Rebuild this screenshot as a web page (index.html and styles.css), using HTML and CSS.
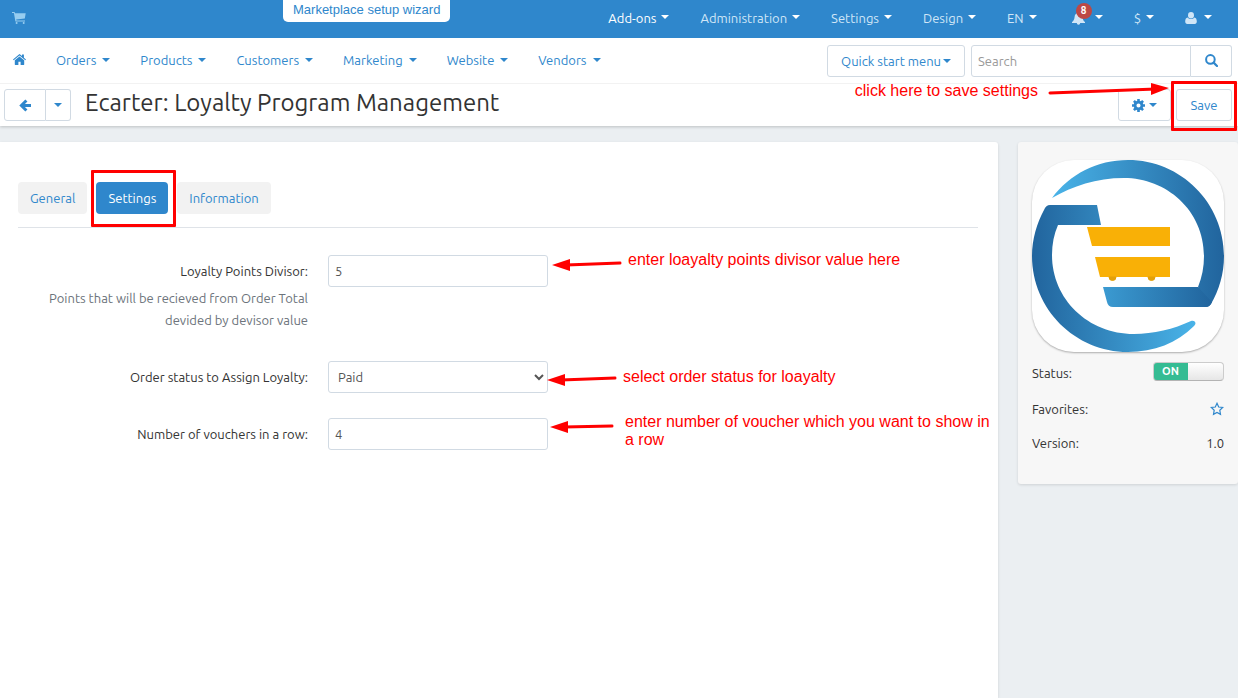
FILE: index.html
```html
<!DOCTYPE html>
<html lang="en">
<head>
    <meta charset="UTF-8">
    <meta name="viewport" content="width=device-width, initial-scale=1.0">
    <title>Ecarter: Loyalty Program Management</title>
    <link rel="stylesheet" href="styles.css">
</head>
<body>
    <header>
      <div class="topbar">
        <a href="#" class="cart" aria-label="Storefront">
          <svg width="14" height="12" viewBox="0 0 14 12"><path d="M0 0h2.6l.4 1.300h10.700l-.9 5.200-8.600 1 .2 1H13v1H3.400L1.900 1H0z" fill="currentColor"/><circle cx="4.600" cy="11" r="1" fill="currentColor"/><circle cx="11.700" cy="11" r="1" fill="currentColor"/></svg>
        </a>
        <a href="#" class="wizard">Marketplace setup wizard</a>
        <nav class="top-nav">
          <a href="#" class="active">Add-ons <i class="caret"></i></a>
          <a href="#">Administration <i class="caret"></i></a>
          <a href="#">Settings <i class="caret"></i></a>
          <a href="#">Design <i class="caret"></i></a>
          <a href="#" class="lang">EN <i class="caret"></i></a>
          <a href="#" class="bell" aria-label="Notifications">
            <svg width="13" height="13" viewBox="0 0 13 13"><path d="M6.500 0c.6 0 .9.400.9.900 2 .4 2.800 2 3 4 .3 2.600 1.100 4 2.600 5.100v1H8.200a1.700 1.700 0 0 1-3.400 0H0v-1c1.500-1.100 2.300-2.500 2.600-5.100.2-2 1-3.600 3-4 0-.5.3-.9.900-.9z" fill="currentColor"/></svg>
            <span class="badge">8</span>
            <i class="caret"></i>
          </a>
          <a href="#">$ <i class="caret"></i></a>
          <a href="#" class="account" aria-label="Account">
            <svg width="12" height="12" viewBox="0 0 12 12"><ellipse cx="6" cy="3.200" rx="3" ry="3.200" fill="currentColor"/><path d="M2.700 5.400C.8 5.600.2 7.400.2 9.600.2 11 1 12 2.300 12h7.400c1.300 0 2.100-1 2.100-2.400 0-2.200-.6-4-2.500-4.200-.8 1-2 1.700-3.300 1.700S3.500 6.400 2.700 5.400z" fill="currentColor"/></svg>
            <i class="caret"></i>
          </a>
        </nav>
      </div>

      <div class="subnav">
        <nav class="main-nav">
          <a href="#" class="home" aria-label="Home">
            <svg width="13" height="11" viewBox="0 0 13 11"><path d="M6.500 0 9 2.100V.6h1.900v3.100L13 5.500l-.7.8-5.800-4.900L.7 6.300 0 5.500z" fill="currentColor"/><path d="M6.500 2.400 11.200 6.300v4.200c0 .3-.2.5-.5.500H7.600V7.700H5.400V11H2.300c-.3 0-.5-.2-.5-.5V6.300z" fill="currentColor"/></svg>
          </a>
          <a href="#">Orders <i class="caret"></i></a>
          <a href="#">Products <i class="caret"></i></a>
          <a href="#">Customers <i class="caret"></i></a>
          <a href="#">Marketing <i class="caret"></i></a>
          <a href="#">Website <i class="caret"></i></a>
          <a href="#">Vendors <i class="caret"></i></a>
        </nav>
        <button type="button" class="btn quick">Quick start menu<i class="caret"></i></button>
        <form class="search">
          <input type="text" placeholder="Search" aria-label="Search">
          <button type="button" aria-label="Find">
            <svg width="13" height="13" viewBox="0 0 13 13"><circle cx="5.400" cy="5.400" r="4.300" fill="none" stroke="currentColor" stroke-width="2"/><path d="M8.600 8.600l3.400 3.400" stroke="currentColor" stroke-width="2.200" stroke-linecap="round"/></svg>
          </button>
        </form>
      </div>

      <div class="actions">
        <div class="btn-group">
          <button type="button" class="btn back" aria-label="Back">
            <svg width="13" height="13" viewBox="0 0 13 13"><path d="M7.400 1.500 2.400 6.500l5 5M3 6.500h9" fill="none" stroke="currentColor" stroke-width="3"/></svg>
          </button>
          <button type="button" class="btn more" aria-label="History"><i class="caret"></i></button>
        </div>
        <h1>Ecarter: Loyalty Program Management</h1>
        <div class="note note-save">
          click here to save settings
          <svg width="122" height="14" viewBox="0 0 122 14"><path d="M2 11 108 7" stroke="#f00" stroke-width="3" stroke-linecap="round"/><path d="M121 6 103 1v12z" fill="#f00"/></svg>
        </div>
        <button type="button" class="btn gear" aria-label="Tools">
          <svg width="13" height="13" viewBox="0 0 12 12"><circle cx="6" cy="6" r="3.200" fill="none" stroke="currentColor" stroke-width="2.600"/><path d="M6 0v2M6 10v2M0 6h2M10 6h2M1.800 1.800l1.400 1.400M8.800 8.800l1.400 1.400M1.800 10.200l1.400-1.400M8.800 3.200l1.400-1.400" stroke="currentColor" stroke-width="2.400"/></svg>
          <i class="caret"></i>
        </button>
        <div class="marked mark-save">
          <button type="button" class="btn save">Save</button>
        </div>
      </div>
    </header>

    <main>
      <section class="panel">
        <div class="tabs">
          <button type="button">General</button>
          <div class="marked mark-tab"><button type="button" class="active">Settings</button></div>
          <button type="button">Information</button>
        </div>

        <form class="settings">
          <div class="row">
            <div class="label">
              <label for="divisor">Loyalty Points Divisor:</label>
              <p>Points that will be recieved from Order Total devided by devisor value</p>
            </div>
            <div class="control">
              <input type="text" id="divisor" value="5">
              <div class="note note-divisor">
                <svg width="70" height="14" viewBox="0 0 70 14"><path d="M68 6 14 8" stroke="#f00" stroke-width="3" stroke-linecap="round"/><path d="M0 8 18 2v12z" fill="#f00"/></svg>
                <span>enter loayalty points divisor value here</span>
              </div>
            </div>
          </div>
          <div class="row">
            <div class="label"><label for="status">Order status to Assign Loyalty:</label></div>
            <div class="control">
              <select id="status"><option>Paid</option></select>
              <div class="note note-status">
                <svg width="70" height="14" viewBox="0 0 70 14"><path d="M68 6 14 8" stroke="#f00" stroke-width="3" stroke-linecap="round"/><path d="M0 8 18 2v12z" fill="#f00"/></svg>
                <span>select order status for loayalty</span>
              </div>
            </div>
          </div>
          <div class="row">
            <div class="label"><label for="vouchers">Number of vouchers in a row:</label></div>
            <div class="control">
              <input type="text" id="vouchers" value="4">
              <div class="note note-vouchers">
                <svg width="64" height="14" viewBox="0 0 64 14"><path d="M62 7 14 8" stroke="#f00" stroke-width="3" stroke-linecap="round"/><path d="M0 8 18 2v12z" fill="#f00"/></svg>
                <span>enter number of voucher which you want to show in a row</span>
              </div>
            </div>
          </div>
        </form>
      </section>

      <aside>
        <div class="logo">
          <svg viewBox="0 0 192 192">
            <defs>
              <linearGradient id="top" x1="20" y1="0" x2="192" y2="0" gradientUnits="userSpaceOnUse"><stop offset="0" stop-color="#49b3e8"/><stop offset="1" stop-color="#21649d"/></linearGradient>
              <linearGradient id="bottom" x1="0" y1="0" x2="163" y2="0" gradientUnits="userSpaceOnUse"><stop offset="0" stop-color="#21649d"/><stop offset="1" stop-color="#49b3e8"/></linearGradient>
              <linearGradient id="bar" x1="70" y1="0" x2="180" y2="0" gradientUnits="userSpaceOnUse"><stop offset="0" stop-color="#3b9bd2"/><stop offset="1" stop-color="#21649d"/></linearGradient>
            </defs>
            <path d="M20 38C38 14 65 0 96 0c53 0 96 43 96 96 0 18-5 34-13 48q-2 3-6 3l-7-20c4-10 6-20 6-31 0-46-38-78-80-78-28 0-51 8-72 20z" fill="url(#top)"/>
            <path d="M71 127h95l14 15q-2 5-6 5H81q-5 0-6-5z" fill="url(#bar)"/>
            <path d="M18 45h47l4 20H26c-4 9-6 19-6 30 0 44 36 79 82 79 19 0 40-5 57-13 4-1 6 2 3 5-17 17-40 26-66 26-53 0-96-43-96-96 0-17 5-33 12-46q2-5 6-5z" fill="url(#bottom)"/>
            <path d="M55 67h83v19H60zM63 97h75v20H68z" fill="#f9b006"/>
            <path d="M77 117h7a3.500 3.500 0 0 1-7 0zM116 117h7a3.500 3.500 0 0 1-7 0z" fill="#e3a008" stroke="#e3a008"/>
          </svg>
        </div>
        <div class="info">
          <label for="enabled">Status:</label>
          <span class="switch"><input type="checkbox" id="enabled" checked><span class="on">ON</span></span>
        </div>
        <div class="info">
          <span>Favorites:</span>
          <a href="#" aria-label="Add to favorites">
            <svg width="14" height="14" viewBox="0 0 14 14"><path d="M7 1.300 8.700 5l4 .5-2.900 2.800.7 4L7 10.400l-3.500 1.900.7-4L1.300 5.500l4-.5z" fill="none" stroke="currentColor" stroke-width="1.200"/></svg>
          </a>
        </div>
        <div class="info">
          <span>Version:</span>
          <span>1.0</span>
        </div>
      </aside>
    </main>
</body>
</html>
```
FILE: styles.css
```css
* {
  box-sizing: border-box;
}

body {
  font-family: Ubuntu, 'Noto Sans', sans-serif;
  font-size: 13px;
  line-height: 22px;
  color: #333;
  background: #ebeff2;
  margin: 0;
  min-height: 100vh;
  display: flex;
  flex-direction: column;
}

a {
  color: #2f87cc;
  text-decoration: none;
}

svg {
  display: block;
}

button, input, select {
  font-family: inherit;
  font-size: 13px;
}

button {
  cursor: pointer;
}

.caret {
  display: inline-block;
  border: 4px solid transparent;
  border-top-color: currentColor;
  border-bottom: 0;
}

/* header */
header {
  background: #fff;
  box-shadow: 0 1px 3px rgba(0, 0, 0, 0.2);
}

.topbar {
  display: flex;
  align-items: center;
  height: 38px;
  padding: 0 26px 2px 12px;
  background: #2f87cc;
}

.cart {
  color: #97cdf0;
}

.wizard {
  align-self: flex-start;
  margin-left: 257px;
  height: 22px;
  padding: 0 10px;
  line-height: 20px;
  font-family: 'Liberation Sans', sans-serif;
  background: #fff;
  border-radius: 0 0 5px 5px;
}

.top-nav, .main-nav {
  display: flex;
  align-items: center;
  gap: 31px;
}

.top-nav {
  margin-left: auto;
}

.main-nav {
  gap: 30px;
  padding-bottom: 2px;
}

.top-nav a, .main-nav a {
  display: flex;
  align-items: center;
  gap: 5px;
}

.main-nav a {
  gap: 6px;
}

.top-nav a {
  position: relative;
  height: 22px;
  color: #d0e6f7;
}

.top-nav .active, .top-nav .caret {
  color: #fff;
}

.top-nav .caret {
  margin-bottom: 3px;
}

.top-nav .lang {
  margin-right: 4px;
}

.top-nav .bell {
  gap: 10px;
}

.top-nav .account {
  gap: 7px;
}

.badge {
  position: absolute;
  left: 4px;
  top: -4px;
  width: 16px;
  height: 16px;
  border-radius: 8px;
  background: #bd4845;
  color: #fff;
  font-size: 10px;
  font-weight: bold;
  line-height: 15px;
  text-align: center;
}

.subnav {
  display: flex;
  align-items: center;
  height: 46px;
  padding: 0 6px 0 13px;
  border-bottom: 1px solid #f2f2f2;
}

.btn {
  display: flex;
  align-items: center;
  justify-content: center;
  height: 32px;
  padding: 0 13px;
  color: #2f87cc;
  background: #fff;
  border: 1px solid #d1dae3;
  border-radius: 3px;
}

.quick {
  gap: 2px;
  margin-left: auto;
}

.search {
  display: flex;
  width: 261px;
  margin-left: 6px;
}

.search input {
  flex: 1;
  min-width: 0;
  height: 32px;
  padding: 0 6px;
  border: 1px solid #d1dae3;
  border-radius: 3px 0 0 3px;
}

.search input::placeholder {
  color: #999;
}

.search button {
  display: flex;
  align-items: center;
  justify-content: center;
  width: 41px;
  color: #2f87cc;
  background: #fff;
  border: 1px solid #d1dae3;
  border-left: 0;
  border-radius: 0 3px 3px 0;
}

.actions {
  display: flex;
  align-items: center;
  height: 42px;
  padding: 0 6px 0 4px;
}

.btn-group {
  display: flex;
}

.back {
  width: 42px;
  border-radius: 3px 0 0 3px;
}

.more {
  width: 25px;
  padding: 0;
  border-left: 0;
  border-radius: 0 3px 3px 0;
}

h1 {
  margin: 0 auto 0 14px;
  padding-bottom: 4px;
  font-size: 24px;
  font-weight: normal;
  line-height: 32px;
}

.gear {
  gap: 4px;
  width: 53px;
  margin-right: 5px;
}

.save {
  width: 56px;
}

/* red hints drawn over the page */
.note {
  color: #f00;
  font-family: 'Liberation Sans', sans-serif;
  font-size: 16px;
  line-height: 18px;
}

.note-save {
  position: absolute;
  right: 68px;
  top: 82px;
  display: flex;
  gap: 10px;
}

.marked {
  position: relative;
}

.marked::after {
  content: '';
  position: absolute;
  inset: -8px -5px -10px;
  border: 3px solid #f00;
  border-radius: 1px;
  pointer-events: none;
}

.mark-tab::after {
  inset: -12px -8px -13px -5px;
}

/* content */
main {
  display: flex;
  flex: 1;
  align-items: flex-start;
  gap: 20px;
  padding-top: 16px;
}

.panel {
  flex: 1;
  align-self: stretch;
  padding: 40px 20px 20px 18px;
  background: #fff;
  border-radius: 0 3px 0 0;
  box-shadow: 0 1px 3px rgba(0, 0, 0, 0.12);
}

.tabs {
  display: flex;
  gap: 9px;
  padding-bottom: 13px;
  border-bottom: 1px solid #dfe3e8;
}

.tabs button {
  height: 32px;
  padding: 0 12px;
  color: #2f87cc;
  background: #f2f2f2;
  border: 0;
  border-radius: 4px;
}

.tabs .active {
  color: #fff;
  background: #2f87cc;
}

.settings {
  padding-top: 27px;
}

.row {
  display: flex;
  gap: 20px;
  margin-bottom: 25px;
}

.label {
  width: 290px;
  padding-left: 20px;
  text-align: right;
}

.label label {
  display: block;
  line-height: 32px;
}

.label p {
  margin: 0 0 5px;
  color: #6c737b;
}

.control {
  position: relative;
}

.control input, .control select {
  display: block;
  width: 220px;
  height: 32px;
  padding: 0 6px;
  color: #555;
  background: #fff;
  border: 1px solid #d1dae3;
  border-radius: 3px;
}

.control select {
  padding: 0 0 0 5px;
}

.control .note {
  position: absolute;
  display: flex;
  gap: 6px;
}

.control .note svg {
  flex: none;
}

.control .note-divisor {
  left: 224px;
  top: -4px;
  width: 360px;
}

.control .note-status {
  left: 219px;
  top: 7px;
  width: 360px;
}

.control .note-vouchers {
  left: 222px;
  top: -5px;
  width: 446px;
  gap: 11px;
}

.note-divisor svg, .note-vouchers svg {
  margin-top: 6px;
}

.note-status svg {
  margin-top: 4px;
}

/* sidebar */
aside {
  width: 220px;
  padding: 18px 14px;
  background: #f7f7f7;
  border-radius: 3px;
  box-shadow: 0 1px 3px rgba(0, 0, 0, 0.12);
}

.logo {
  margin-bottom: 10px;
  background: #fff;
  border-radius: 42px;
  box-shadow: 0 1px 2px rgba(0, 0, 0, 0.3);
}

.info {
  display: flex;
  align-items: center;
  justify-content: space-between;
  margin-bottom: 12px;
}

.logo + .info {
  margin-bottom: 14px;
}

.switch {
  position: relative;
  align-self: flex-start;
  width: 71px;
  height: 19px;
}

.switch input {
  appearance: none;
  display: block;
  width: 71px;
  height: 19px;
  margin: 0;
  border: 1px solid #ccc;
  border-bottom-color: #b3b3b3;
  border-radius: 4px;
  background: linear-gradient(90deg, #35bc93 34px, transparent 34px), linear-gradient(#fff, #e6e6e6);
}

.on {
  position: absolute;
  left: 9px;
  top: 0;
  color: #fff;
  font-size: 11px;
  font-weight: bold;
  line-height: 18px;
  pointer-events: none;
}
```
